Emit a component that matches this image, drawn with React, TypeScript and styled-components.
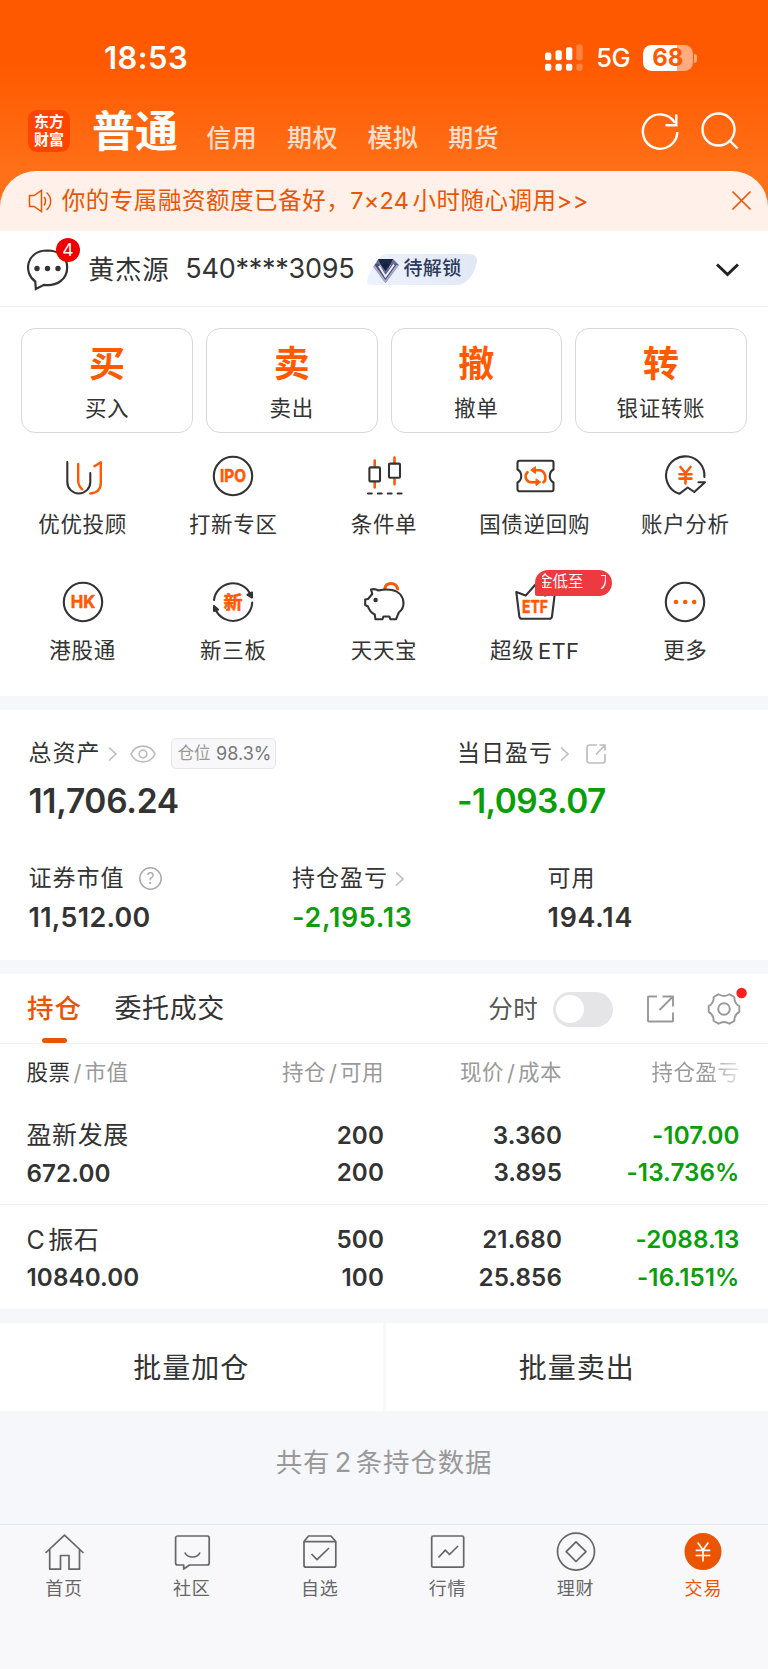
import React from "react";
import styled, { createGlobalStyle } from "styled-components";

const ORANGE = "#ff5a00";
const INK = "#333333";
const GREEN = "#0a9f0a";
const BAND = "#f6f7fa";

const Global = createGlobalStyle`
  * { box-sizing: border-box; }
  html, body { margin: 0; padding: 0; }
  body {
    width: 768px;
    font-family: Inter, "Noto Sans CJK SC", sans-serif;
    color: ${INK};
    background: #fff;
    -webkit-font-smoothing: antialiased;
    text-autospace: no-autospace;
  }
  svg { display: block; overflow: visible; flex: none; }
`;

const Screen = styled.div`
  width: 768px;
  height: 1669px;
  display: flex;
  flex-direction: column;
  overflow: hidden;
`;

const T = styled.span<{ s: number; w?: number; c?: string; ls?: number }>`
  font-size: ${(p) => p.s}px;
  font-weight: ${(p) => p.w ?? 400};
  color: ${(p) => p.c ?? "inherit"};
  letter-spacing: ${(p) => p.ls ?? 0}px;
  line-height: 1.2;
  white-space: nowrap;
  display: block;
`;

/* ---------- header ---------- */

const Header = styled.header`
  height: 230.5px;
  background: linear-gradient(180deg, #ff5900 0, #ff5900 62px, #ff7018 172px, #ff7018 100%);
  display: flex;
  flex-direction: column;
`;

const StatusBar = styled.div`
  height: 96px;
  padding: 20px 71px 0 104px;
  display: flex;
  align-items: center;
  justify-content: space-between;
  color: #fff;
`;

const StatusRight = styled.div`
  display: flex;
  align-items: center;
`;

const Battery = styled.div`
  width: 49.5px;
  height: 26.5px;
  margin-left: 13px;
  border-radius: 8.5px;
  background: linear-gradient(90deg, #fff 68%, #ffaa80 68%);
  display: flex;
  align-items: center;
  justify-content: center;
`;

const BatteryCap = styled.div`
  width: 3px;
  height: 9px;
  margin-left: 1.5px;
  border-radius: 0 4px 4px 0;
  background: #ffaa80;
`;

const TitleBar = styled.div`
  height: 75.3px;
  display: flex;
  align-items: flex-start;
  padding: 0 28px;
`;

const Logo = styled.div`
  width: 42px;
  height: 42px;
  margin-top: 14px;
  border-radius: 9px;
  background: #ff4400;
  display: flex;
  flex-direction: column;
  align-items: center;
  justify-content: center;
  color: #fff;
  font-size: 15px;
  font-weight: 700;
  line-height: 17.6px;
`;

const MainTab = styled.div`
  margin: 9.5px 0 0 22px;
  width: 86px;
`;

const SubTabs = styled.div`
  display: flex;
  gap: 29.6px;
  margin: 27px 0 0 28.3px;
`;

const HeaderTools = styled.div`
  display: flex;
  margin: 11.5px 0 0 auto;
  gap: 20.5px;
`;

const Notice = styled.div`
  flex: 1;
  border-radius: 36px 36px 0 0;
  background: #fff1e9;
  display: flex;
  align-items: center;
  padding: 0 17.5px 0 28px;
  color: #ea5504;
`;

const NoticeText = styled.div`
  margin-left: 9.7px;
  display: flex;
  align-items: center;
  flex: 1;
`;

/* ---------- account ---------- */

const Account = styled.div`
  height: 76.3px;
  border-bottom: 1.5px solid #ededef;
  display: flex;
  align-items: center;
  padding: 3px 27px 0 26px;
`;

const ChatIcon = styled.div`
  position: relative;
  width: 43px;
  height: 42px;
`;

const Count = styled.div`
  position: absolute;
  left: 30px;
  top: -11px;
  width: 24px;
  height: 24px;
  border-radius: 50%;
  background: #ee0000;
  display: flex;
  align-items: center;
  justify-content: center;
  color: #fff;
`;

const Vip = styled.div`
  width: 111px;
  height: 31.5px;
  display: flex;
  align-items: center;
  background: linear-gradient(70deg, #edf2ff, #e1e7f4);
  clip-path: path("M11 6 Q15 0 22 0 H102 Q112 0 110 9 C107 22 99 31.5 88 31.5 H6 Q-2 31.5 1 24 Q5 14 11 6 Z");
`;

/* ---------- trade cards ---------- */

const Cards = styled.div`
  display: grid;
  grid-template-columns: repeat(4, 1fr);
  gap: 13px;
  padding: 21.7px 21.3px 0;
  height: 126px;
`;

const Card = styled.div`
  height: 104.5px;
  border: 1.2px solid #d8d8d8;
  border-radius: 14px;
  display: flex;
  flex-direction: column;
  align-items: center;
  padding-top: 13.5px;
`;

const CardLabel = styled.div`
  margin-top: 10px;
`;

const Features = styled.div`
  height: 263.7px;
  padding: 21.7px 7.3px 0;
  display: grid;
  grid-template-columns: repeat(5, 1fr);
  grid-auto-rows: 125.6px;
`;

const Feature = styled.div`
  position: relative;
  display: flex;
  flex-direction: column;
  align-items: center;
  gap: 14px;
`;

const FeatureName = styled.div`
  display: flex;
  align-items: center;
  gap: 3.5px;
`;

const Promo = styled.div`
  position: absolute;
  left: 76px;
  top: -10.5px;
  width: 77px;
  height: 26.3px;
  border-radius: 13px 13px 13px 2px;
  background: #ed3a3f;
  color: #fff;
  display: flex;
  align-items: center;
  justify-content: space-between;
  padding: 0 6.5px 0 6.5px;
`;

const PromoClip = styled.div<{ w: number; from: "left" | "right" }>`
  width: ${(p) => p.w}px;
  overflow: hidden;
  display: flex;
  justify-content: ${(p) => (p.from === "left" ? "flex-start" : "flex-end")};
`;

const Divider = styled.div<{ h: number }>`
  height: ${(p) => p.h}px;
  background: ${BAND};
`;

/* ---------- assets ---------- */

const Assets = styled.section`
  height: 249.3px;
  padding: 27.3px 28.5px 0;
`;

const AssetRow = styled.div<{ cols: string }>`
  display: grid;
  grid-template-columns: ${(p) => p.cols};
`;

const LowerAssets = styled(AssetRow)`
  margin-top: 41.5px;
`;

const AssetCell = styled.div<{ gap: number }>`
  display: flex;
  flex-direction: column;
  gap: ${(p) => p.gap}px;
`;

const LabelLine = styled.div`
  height: 31.5px;
  display: flex;
  align-items: center;
`;

const Ratio = styled.div`
  width: 104.5px;
  height: 31.5px;
  margin-left: 15px;
  padding-left: 2.5px;
  border: 1px solid #e6e6e8;
  border-radius: 5px;
  background: #f8f8fa;
  display: flex;
  align-items: center;
  justify-content: center;
  gap: 5.5px;
`;

const Push = styled.div<{ x: number }>`
  margin-left: ${(p) => p.x}px;
`;

/* ---------- holdings ---------- */

const TabsBar = styled.div`
  height: 70px;
  border-bottom: 1px solid #f1f1f3;
  display: flex;
  align-items: center;
  padding: 2px 28px 0 27px;
`;

const HoldTab = styled.div`
  position: relative;
  height: 100%;
  display: flex;
  align-items: center;
  margin-right: 32.7px;
  &::after {
    content: "";
    position: absolute;
    left: 15px;
    bottom: -0.5px;
    width: 25px;
    height: 5px;
    border-radius: 2.5px;
    background: #ea5504;
  }
`;

const Switch = styled.div`
  width: 63px;
  height: 35px;
  margin: 0 33.8px 0 14.2px;
  padding: 3.5px;
  border-radius: 18px;
  background: #e5e5e8;
  &::before {
    content: "";
    display: block;
    width: 28px;
    height: 28px;
    border-radius: 50%;
    background: #fff;
  }
`;

const Grid4 = styled.div<{ h: number }>`
  height: ${(p) => p.h}px;
  display: grid;
  grid-template-columns: 172px 185.500px 178px 177.500px;
  align-items: center;
  padding: 1.5px 0 0 26.5px;
`;

const HeadCell = styled.div<{ fade?: boolean }>`
  display: flex;
  align-items: center;
  gap: 3px;
  justify-content: flex-end;
  color: #999;
  &:first-child { justify-content: flex-start; }
  ${(p) => p.fade && "mask-image: linear-gradient(90deg, #000 82%, rgba(0,0,0,.25) 100%);"}
`;

const StockRow = styled(Grid4)`
  padding-top: 3px;
  &:not(:last-child) { border-bottom: 1px solid #f1f1f3; }
`;

const StockCell = styled.div<{ c?: string }>`
  display: flex;
  flex-direction: column;
  gap: 8.5px;
  align-items: flex-end;
  color: ${(p) => p.c ?? INK};
  &:first-child { align-items: flex-start; }
`;

const StockName = styled.div`
  display: flex;
  gap: 3.5px;
`;

const Batch = styled.div`
  height: 87.5px;
  display: grid;
  grid-template-columns: 1fr 1fr;
  gap: 3px;
  background: #f8f8fa;
`;

const BatchButton = styled.div`
  background: #fff;
  display: flex;
  align-items: center;
  justify-content: center;
  padding-top: 3px;
`;

const Summary = styled.div`
  height: 113px;
  background: ${BAND};
  display: flex;
  justify-content: center;
  align-items: center;
  padding-bottom: 8px;
  gap: 4.5px;
`;

const Nav = styled.nav`
  flex: 1;
  border-top: 1.5px solid #e6e7ea;
  background: #f8f8fb;
  display: grid;
  grid-template-columns: repeat(6, 127.9px);
  padding-top: 7px;
`;

const NavItem = styled.div<{ active?: boolean }>`
  display: flex;
  flex-direction: column;
  align-items: center;
  gap: 6px;
  color: ${(p) => (p.active ? "#ea5504" : "#666")};
`;

/* ---------- icons ---------- */

const Arrow = () => (
  <svg width="9" height="14" viewBox="0 0 9 14" fill="none" stroke="#bdbdbd" strokeWidth="1.6">
    <path d="M1 .5 8 7 1 13.5" />
  </svg>
);

const Frame: React.FC<{ children: React.ReactNode }> = ({ children }) => (
  <svg width="44" height="44" viewBox="0 0 44 44" fill="none" stroke={INK} strokeWidth="2.1" strokeLinecap="round" strokeLinejoin="round">
    {children}
  </svg>
);

const IconWord: React.FC<{ y: number; s: number; w: number; children: string }> = ({ y, s, w, children }) => (
  <text x={22 - w / 2} y={y} fontSize={s} textLength={w} lengthAdjust="spacingAndGlyphs" fontWeight="700" fill={ORANGE} stroke={ORANGE} strokeWidth=".5">
    {children}
  </text>
);

const featureIcons = {
  advisor: (
    <Frame>
      <path d="M6.300 8V28a11.500 11.500 0 0 0 23 0V19" />
      <g stroke={ORANGE} strokeWidth="2.400">
        <path d="M17.200 10V27q0 4.500 4.100 8.500M33.400 12.200 39.800 8.300V29q0 9.500-10.600 10.500" />
      </g>
    </Frame>
  ),
  ipo: (
    <Frame>
      <circle cx="22" cy="22" r="19.200" />
      <IconWord y={28.3} s={17.5} w={26}>IPO</IconWord>
    </Frame>
  ),
  condition: (
    <Frame>
      <g stroke={ORANGE} strokeWidth="2.600">
        <path d="M12.700 6.500V12M12.700 28.500V33.500M32.500 3.500V9M32.500 25V30.200" />
      </g>
      <rect x="7.400" y="13.400" width="10.600" height="14" rx="1" />
      <rect x="27" y="9.600" width="11" height="14.200" rx="1" />
      <path d="M6 39.500H40" strokeDasharray="3.800 6.100" />
    </Frame>
  ),
  repo: (
    <Frame>
      <path d="M6.500 6.800H38.500a2 2 0 0 1 2 2V15.500C35.500 18 35.500 26 40.500 28.500V35.300a2 2 0 0 1-2 2H6.500a2 2 0 0 1-2-2V28.500C9.500 26 9.500 18 4.500 15.500V8.800a2 2 0 0 1 2-2Z" />
      <g stroke={ORANGE} strokeWidth="2.600">
        <path d="M30.500 28.300C34 25 32.500 16.300 26 16.300H20M14.500 18.200C11 21.500 12.500 28.300 19 28.300H25" />
        <path d="M22.500 13V19.500L18 16.300ZM23 25.200V31.500L27.500 28.300Z" fill={ORANGE} strokeWidth="1" />
      </g>
    </Frame>
  ),
  analysis: (
    <Frame>
      <path d="M41.400 23A19.200 19.200 0 1 0 16.300 39.800L24.700 33.500 31.300 38 42 28.200H35.500" />
      <path d="M17.500 13 22.500 19.200 27.500 13M16.500 20.200H28.500M16.500 24.600H28.500M22.500 19.500V29.500" stroke={ORANGE} strokeWidth="2.600" />
    </Frame>
  ),
  hk: (
    <Frame>
      <circle cx="22" cy="22" r="19.200" />
      <IconWord y={28.300} s={17.500} w={24.500}>HK</IconWord>
    </Frame>
  ),
  board: (
    <Frame>
      <path d="M3 20A19.200 19.200 0 0 1 39.500 14.500M41.200 22.500A19.200 19.200 0 0 1 4.700 30" />
      <path d="M36.500 14.800 41 12.500V17.500ZM3 31V26L7 29.500Z" fill={INK} />
      <IconWord y={29} s={18.500} w={19}>新</IconWord>
    </Frame>
  ),
  piggy: (
    <Frame>
      <path d="M22.800 8.500C24 2 34 1.500 35.700 9" stroke={ORANGE} strokeWidth="3" />
      <path d="M10.300 14 9 9.500C12 8.700 14.500 9.300 16.500 10.500 20 9.700 26 9.300 30 10 37.500 11.500 41.500 17 41.500 23.500 41.500 27 40 30 36.800 32.500L34 39.300H28.500L27.300 36.500H21.500L20.300 39.300H13.500L12.700 34.500C9 32.500 7 30 6 26.500L3.200 25V19.500L6 19Z" />
      <circle cx="13.600" cy="20" r="2.200" fill={INK} stroke="none" />
    </Frame>
  ),
  etf: (
    <Frame>
      <path d="M3.300 12 12.700 15.600 22.500 4.500 32 15.600 42 12 39 36.300Q38.600 38.800 36.300 38.800H9Q6.700 38.800 6.300 36.300Z" />
      <IconWord y={32.600} s={17.500} w={26}>ETF</IconWord>
    </Frame>
  ),
  more: (
    <Frame>
      <circle cx="22" cy="22" r="19.200" />
      <g fill={ORANGE} stroke="none">
        <circle cx="13" cy="22" r="2.300" />
        <circle cx="22.200" cy="22" r="2.300" />
        <circle cx="31.200" cy="22" r="2.300" />
      </g>
    </Frame>
  ),
};

const features: { name: string; latin?: string; icon: keyof typeof featureIcons; promo?: boolean }[] = [
  { name: "优优投顾", icon: "advisor" },
  { name: "打新专区", icon: "ipo" },
  { name: "条件单", icon: "condition" },
  { name: "国债逆回购", icon: "repo" },
  { name: "账户分析", icon: "analysis" },
  { name: "港股通", icon: "hk" },
  { name: "新三板", icon: "board" },
  { name: "天天宝", icon: "piggy" },
  { name: "超级", latin: "ETF", icon: "etf", promo: true },
  { name: "更多", icon: "more" },
];

const navItems: { name: string; active?: boolean; art: React.ReactNode }[] = [
  { name: "首页", art: <path d="M1.500 21 20.500 3.200 39.500 21M5.700 17.500V37.200H16.500V23.500H25V37.200H35.500V17.500" /> },
  {
    name: "社区",
    art: <path d="M5.600 4H35.200a2 2 0 0 1 2 2V31a2 2 0 0 1-2 2H17.500L11.700 37V33H5.600a2 2 0 0 1-2-2V6a2 2 0 0 1 2-2ZM12.800 20.500C15.500 26.500 25.500 26.500 28 20.500" />,
  },
  {
    name: "自选",
    art: <path d="M4 9.500 8.500 4H31L35.800 9.500V33.200a2 2 0 0 1-2 2H6a2 2 0 0 1-2-2ZM4 9.700H35.800M11.500 22 17 27.700 29 16" />,
  },
  { name: "行情", art: <path d="M5.200 4H34.200a1.500 1.500 0 0 1 1.500 1.500V33.700a1.500 1.500 0 0 1-1.500 1.500H5.200a1.500 1.500 0 0 1-1.500-1.500V5.500A1.500 1.500 0 0 1 5.200 4ZM10.500 25.500 17.300 18.200 21.500 22.500 30 14" /> },
  { name: "理财", art: <><circle cx="20" cy="19.600" r="18.500" /><path d="M20 9.800 30 19.600 20 29.500 10.200 19.600Z" /></> },
  {
    name: "交易",
    active: true,
    art: <><circle cx="20" cy="19.600" r="18.500" fill="#ea5504" stroke="none" /><path d="M14.700 10.500 20 18 25.300 10.500M12.700 18.300H27.300M12.700 23.500H27.300M20 18V29.500" stroke="#fff" /></>,
  },
];

const stocks = [
  { latin: "", name: "盈新发展", value: "672.00", hold: "200", free: "200", price: "3.360", cost: "3.895", pl: "-107.00", pct: "-13.736%" },
  { latin: "C", name: "振石", value: "10840.00", hold: "500", free: "100", price: "21.680", cost: "25.856", pl: "-2088.13", pct: "-16.151%" },
];

const Num: React.FC<{ children: string }> = ({ children }) => (
  <T s={24.2} w={600} ls={0.1}>{children}</T>
);

const HeadLabel: React.FC<{ a: string; b: string; dark?: boolean }> = ({ a, b, dark }) => (
  <HeadCell>
    <T s={21.5} ls={0.5} c={dark ? INK : undefined}>{a}</T>
    <T s={22}>/</T>
    <T s={21.5} ls={0.5}>{b}</T>
  </HeadCell>
);

export default function App() {
  return (
    <Screen>
      <Global />
      <Header>
        <StatusBar>
          <T s={31} w={600} ls={0.4}>18:53</T>
          <StatusRight>
            <svg width="38" height="28" viewBox="0 0 38 28" fill="#fff">
              <rect x="0" y="8.500" width="6.300" height="7.800" rx="2" />
              <rect x="10.500" y="6.300" width="6.300" height="10" rx="2" />
              <rect x="21" y="3.300" width="6.300" height="13" rx="2" />
              <rect x="31.400" y="0.500" width="6.300" height="15.800" rx="2" opacity=".25" />
              <rect x="0" y="19.800" width="6.300" height="7" rx="2" />
              <rect x="10.500" y="19.800" width="6.300" height="7" rx="2" />
              <rect x="21" y="19.800" width="6.300" height="7" rx="2" />
              <rect x="31.400" y="19.800" width="6.300" height="7" rx="2" opacity=".25" />
            </svg>
            <Push x={13}><T s={25.5} w={500} ls={-0.5}>5G</T></Push>
            <Battery><T s={24} w={700} c="#ff5a00">68</T></Battery>
            <BatteryCap />
          </StatusRight>
        </StatusBar>
        <TitleBar>
          <Logo>
            <span>东方</span>
            <span>财富</span>
          </Logo>
          <MainTab><T s={43} w={700} c="#fff">普通</T></MainTab>
          <SubTabs>
            {["信用", "期权", "模拟", "期货"].map((t) => (
              <T key={t} s={25} w={500} ls={0.5} c="#ffdfcc">{t}</T>
            ))}
          </SubTabs>
          <HeaderTools>
            <svg width="40" height="42" viewBox="0 0 40 42" fill="none" stroke="#fff" strokeWidth="2.400">
              <path d="M37.300 24A17.200 17.200 0 1 1 35 15M36.300 6.500V17.300H25.500" />
            </svg>
            <svg width="40" height="42" viewBox="0 0 40 42" fill="none" stroke="#fff" strokeWidth="2.400">
              <circle cx="18.500" cy="21.500" r="16" />
              <path d="M29.500 32.500 37.500 40.500" />
            </svg>
          </HeaderTools>
        </TitleBar>
        <Notice>
          <svg width="24" height="24" viewBox="0 0 24 24" fill="none" stroke="#ea5504" strokeWidth="1.500">
            <path d="M1.500 6.500H6L13.500 1.500V22.500L6 17.500H1.500ZM16 8C18 10 18 14 16 16.500M18.500 3.500C24 8 24 16.500 18.500 20.800" />
          </svg>
          <NoticeText>
            <T s={23.5} ls={0.55}>你的专属融资额度已备好，</T>
            <T s={23.5} ls={0.2}>7×24</T>
            <Push x={3.5}><T s={23.5} ls={0.5}>小时随心调用&gt;&gt;</T></Push>
          </NoticeText>
          <svg width="19" height="19" viewBox="0 0 19 19" fill="none" stroke="#ea5504" strokeWidth="1.700">
            <path d="M.5.500 18.500 18.500M18.500.500.500 18.500" />
          </svg>
        </Notice>
      </Header>

      <Account>
        <ChatIcon>
          <svg width="43" height="42" viewBox="0 0 43 42" fill="none" stroke={INK} strokeWidth="2.200">
            <path d="M9.300 32.500C-3 24 0 2 21 1.500 35 1.500 41.200 10 41.200 18.500 41.200 31 30 37.500 18 35.800L9.800 40Z" />
            <g fill={INK} stroke="none">
              <circle cx="11" cy="19.500" r="2.700" />
              <circle cx="21.500" cy="19.500" r="2.700" />
              <circle cx="32" cy="19.500" r="2.700" />
            </g>
          </svg>
          <Count><T s={17.5}>4</T></Count>
        </ChatIcon>
        <Push x={19}><T s={26.5} ls={0.6}>黄杰源</T></Push>
        <Push x={16}><T s={27} ls={-0.25}>540****3095</T></Push>
        <Push x={12.3}>
          <Vip>
            <svg width="30" height="28" viewBox="0 0 30 28">
              <path d="M5 9 11 3H26L32 9 18.500 27Z" fill="#6a6f94" />
              <path d="M11 3 14 9 18.500 4 23 9 26 3Z" fill="#1d2744" />
              <path d="M5 9 14 9 18.500 22 23 9H32L18.500 27Z" fill="#a9a9cc" />
              <path d="M14 9 18.500 4 23 9 18.500 15Z" fill="#142340" />
              <path d="M7 8 18.500 24 30 8 25 8 18.500 18 12 8Z" fill="#4a4d76" />
              <path d="M12 10 18.500 20.500 27 8.500" fill="none" stroke="#eeeef5" strokeWidth="2" />
            </svg>
            <Push x={6.7}><T s={19} w={500} ls={0.4} c="#2d3a5c">待解锁</T></Push>
          </Vip>
        </Push>
        <Push x={238.5}>
          <svg width="23" height="14" viewBox="0 0 23 14" fill="none" stroke="#222" strokeWidth="3">
            <path d="M1 1.500 11.500 11.500 22 1.500" />
          </svg>
        </Push>
      </Account>

      <Cards>
        {[["买", "买入"], ["卖", "卖出"], ["撤", "撤单"], ["转", "银证转账"]].map(([big, label]) => (
          <Card key={label}>
            <T s={36} w={700} c={ORANGE}>{big}</T>
            <CardLabel><T s={21.5} ls={0.7}>{label}</T></CardLabel>
          </Card>
        ))}
      </Cards>

      <Features>
        {features.map((f) => (
          <Feature key={f.icon}>
            {featureIcons[f.icon]}
            <FeatureName>
              <T s={21.5} ls={0.7}>{f.name}</T>
              {f.latin && <T s={22} ls={0.3}>{f.latin}</T>}
            </FeatureName>
            {f.promo && (
              <Promo>
                <PromoClip w={41.5} from="right"><T s={15.4}>金低至</T></PromoClip>
                <PromoClip w={5.5} from="left"><T s={15.4}>万</T></PromoClip>
              </Promo>
            )}
          </Feature>
        ))}
      </Features>
      <Divider h={14} />

      <Assets>
        <AssetRow cols="428.500px 1fr">
          <AssetCell gap={12}>
            <LabelLine>
              <T s={23} ls={1}>总资产</T>
              <Push x={7}><Arrow /></Push>
              <Push x={13.5}>
                <svg width="26" height="18" viewBox="0 0 26 18" fill="none" stroke="#bdbdbd" strokeWidth="1.700">
                  <path d="M1 9C6-1.500 20-1.500 25 9 20 19.500 6 19.500 1 9Z" />
                  <circle cx="13" cy="9" r="3.800" />
                </svg>
              </Push>
              <Ratio>
                <T s={16.5} c="#999">仓位</T>
                <T s={18} c="#777">98.3%</T>
              </Ratio>
            </LabelLine>
            <T s={33.5} w={600} ls={-0.3}>11,706.24</T>
          </AssetCell>
          <AssetCell gap={12}>
            <LabelLine>
              <T s={23} ls={1}>当日盈亏</T>
              <Push x={7}><Arrow /></Push>
              <Push x={17}>
                <svg width="20" height="20" viewBox="0 0 20 20" fill="none" stroke="#bdbdbd" strokeWidth="1.700">
                  <path d="M11 1H3.500A2.500 2.500 0 0 0 1 3.500V16.500A2.500 2.500 0 0 0 3.500 19H16.500A2.500 2.500 0 0 0 19 16.500V10M13.500 1H19V6.500M19 1 10 10.500" />
                </svg>
              </Push>
            </LabelLine>
            <T s={33.5} w={600} ls={-0.6} c={GREEN}>-1,093.07</T>
          </AssetCell>
        </AssetRow>
        <LowerAssets cols="263.500px 255.500px 1fr">
          <AssetCell gap={6.5}>
            <LabelLine>
              <T s={23} ls={1}>证券市值</T>
              <Push x={14}>
                <svg width="23" height="23" viewBox="0 0 23 23" fill="none" stroke="#aaa" strokeWidth="1.500">
                  <circle cx="11.500" cy="11.500" r="10.700" />
                  <text x="11.500" y="17" textAnchor="middle" fontSize="15.500" fill="#aaa" stroke="none">?</text>
                </svg>
              </Push>
            </LabelLine>
            <T s={26.8} w={600} ls={0.35}>11,512.00</T>
          </AssetCell>
          <AssetCell gap={6.5}>
            <LabelLine>
              <T s={23} ls={1}>持仓盈亏</T>
              <Push x={7}><Arrow /></Push>
            </LabelLine>
            <T s={26.8} w={600} ls={0.75} c={GREEN}>-2,195.13</T>
          </AssetCell>
          <AssetCell gap={6.5}>
            <LabelLine><T s={23} ls={1}>可用</T></LabelLine>
            <T s={26.8} w={600} ls={0.8}>194.14</T>
          </AssetCell>
        </LowerAssets>
      </Assets>
      <Divider h={14} />

      <TabsBar>
        <HoldTab><T s={26.5} w={500} ls={0.9} c="#ea5504">持仓</T></HoldTab>
        <T s={27} ls={0.6}>委托成交</T>
        <Push x={263.3}><T s={24.5} ls={0.6} c="#555">分时</T></Push>
        <Switch />
        <svg width="28" height="28" viewBox="0 0 28 28" fill="none" stroke="#999" strokeWidth="1.900">
          <path d="M10 1.500H1.800A.8.800 0 0 0 1 2.300V25.700A.8.800 0 0 0 1.800 26.500H25.200A.8.800 0 0 0 26 25.700V17.500M15.500 1.500H26V11.500M26 1.500 12.500 15" />
        </svg>
        <Push x={33}>
          <svg width="32" height="32" viewBox="0 0 32 32" fill="none" stroke="#999" strokeWidth="1.900" strokeLinejoin="round">
            <path d="M10.500 1.300Q16 4.600 21.500 1.300L26.300 4Q26.200 10.300 31.300 13.200V18.800Q26.200 21.700 26.300 28L21.500 30.700Q16 27.400 10.500 30.700L5.700 28Q5.800 21.700.7 18.800V13.200Q5.800 10.300 5.700 4Z" />
            <circle cx="16" cy="16" r="5.800" />
            <circle cx="33.600" cy="0" r="5.200" fill="#fa2020" stroke="none" />
          </svg>
        </Push>
      </TabsBar>

      <Grid4 h={57}>
        <HeadLabel a="股票" b="市值" dark />
        <HeadLabel a="持仓" b="可用" />
        <HeadLabel a="现价" b="成本" />
        <HeadCell fade><T s={21.5} ls={0.5}>持仓盈亏</T></HeadCell>
      </Grid4>
      <div>
        {stocks.map((s) => (
          <StockRow h={104} key={s.name}>
            <StockCell>
              <StockName>
                {s.latin && <T s={25}>{s.latin}</T>}
                <T s={25} ls={0.6}>{s.name}</T>
              </StockName>
              <Num>{s.value}</Num>
            </StockCell>
            <StockCell><Num>{s.hold}</Num><Num>{s.free}</Num></StockCell>
            <StockCell><Num>{s.price}</Num><Num>{s.cost}</Num></StockCell>
            <StockCell c={GREEN}><Num>{s.pl}</Num><Num>{s.pct}</Num></StockCell>
          </StockRow>
        ))}
      </div>
      <Divider h={14.5} />

      <Batch>
        <BatchButton><T s={28} ls={1}>批量加仓</T></BatchButton>
        <BatchButton><T s={28} ls={1}>批量卖出</T></BatchButton>
      </Batch>
      <Summary>
        <T s={26.5} ls={0.8} c="#999">共有</T>
        <T s={27} c="#999">2</T>
        <T s={26.5} ls={0.8} c="#999">条持仓数据</T>
      </Summary>

      <Nav>
        {navItems.map((n) => (
          <NavItem key={n.name} active={n.active}>
            <svg width="40" height="40" viewBox="0 0 40 40" fill="none" stroke="#666" strokeWidth="1.700" strokeLinejoin="round">
              {n.art}
            </svg>
            <T s={18} ls={0.8}>{n.name}</T>
          </NavItem>
        ))}
      </Nav>
    </Screen>
  );
}
